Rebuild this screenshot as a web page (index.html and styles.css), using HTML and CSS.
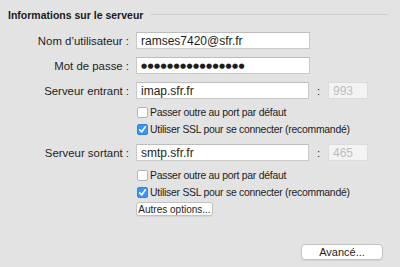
FILE: index.html
```html
<!DOCTYPE html>
<html lang="fr">
<head>
    <meta charset="UTF-8">
    <title>Informations sur le serveur</title>
    <link rel="stylesheet" href="styles.css">
</head>
<body>
    <div class="section-title">
        <span>Informations sur le serveur</span>
        <div class="rule"></div>
    </div>
    <div class="form">
        <div class="row r-user">
            <label class="lbl">Nom d’utilisateur :</label>
            <input class="field wide" type="text" value="ramses7420@sfr.fr">
        </div>
        <div class="row r-pass">
            <label class="lbl">Mot de passe :</label>
            <input class="field wide dots" type="text" value="●●●●●●●●●●●●●●●●">
        </div>
        <div class="row r-in">
            <label class="lbl">Serveur entrant :</label>
            <input class="field server" type="text" value="imap.sfr.fr">
            <span class="colon">:</span>
            <input class="field port" type="text" placeholder="993" disabled>
        </div>
        <div class="row check r-c1">
            <span class="box"></span>
            <span>Passer outre au port par défaut</span>
        </div>
        <div class="row check r-c2">
            <span class="box on"><svg viewBox="0 0 11 11" width="11" height="11"><path d="M2.6 5.8 L4.6 7.9 L8.4 2.8" fill="none" stroke="#fff" stroke-width="1.6" stroke-linecap="round" stroke-linejoin="round"/></svg></span>
            <span>Utiliser SSL pour se connecter (recommandé)</span>
        </div>
        <div class="row r-out">
            <label class="lbl">Serveur sortant :</label>
            <input class="field server" type="text" value="smtp.sfr.fr">
            <span class="colon">:</span>
            <input class="field port" type="text" placeholder="465" disabled>
        </div>
        <div class="row check r-c3">
            <span class="box"></span>
            <span>Passer outre au port par défaut</span>
        </div>
        <div class="row check r-c4">
            <span class="box on"><svg viewBox="0 0 11 11" width="11" height="11"><path d="M2.6 5.8 L4.6 7.9 L8.4 2.8" fill="none" stroke="#fff" stroke-width="1.6" stroke-linecap="round" stroke-linejoin="round"/></svg></span>
            <span>Utiliser SSL pour se connecter (recommandé)</span>
        </div>
        <div class="row r-more">
            <button class="btn small">Autres options...</button>
        </div>
    </div>
    <div class="footer">
        <button class="btn advanced">Avancé...</button>
    </div>
</body>
</html>
```

FILE: styles.css
```css
body{margin:0;width:400px;height:267px;background:#e3e3e3;color:#1d1d1d;font-family:"Liberation Sans",Arial,sans-serif;font-size:11px;overflow:hidden}
.section-title{display:flex;align-items:center;height:14px;margin:8px 12px 0 8px;font-weight:bold;font-size:10.5px;color:#1a1a1a}
.section-title .rule{flex:1;border-top:1px solid #cfcfcf;margin-left:7px;margin-top:-1px}
.form{display:flex;flex-direction:column;margin-top:10px}
.row{display:flex;align-items:center;height:17px;white-space:nowrap}
.lbl{width:136px;text-align:right;padding-right:7px;box-sizing:border-box;font-size:11.4px}
.field{height:17px;box-sizing:border-box;border:1px solid #c9c9c9;border-top-color:#bdbdbd;background:#fff;font-family:inherit;font-size:12px;color:#1d1d1d;padding:0 4px;margin:0;outline:none}
.wide{width:174px}
.server{width:173px}
.dots{font-family:"DejaVu Sans",sans-serif;font-size:7px;letter-spacing:0.4px;padding-left:4px}
.colon{width:19px;text-align:center}
.port{width:40px;border-color:#dcdcdc;background:#f3f3f3}
.port::placeholder{color:#bdbdbd}
.r-pass,.r-in{margin-top:8px}
.check{padding-left:137px;gap:3px;font-size:10.4px;letter-spacing:-0.25px}
.r-c1{margin-top:5px}
.r-out{margin-top:6px}
.r-c3{margin-top:6px}
.box{width:11px;height:11px;box-sizing:border-box;border:1px solid #b3b3b3;border-radius:2px;background:#fff;display:flex;margin-right:-1px}
.box.on{background:#3a95f5;border-color:#2f84e0}
.box svg{display:block;margin:-1px}
.r-more{padding-left:136px;margin-top:1px;height:14px}
.btn{font-family:inherit;font-size:10px;color:#1d1d1d;background:#fff;border:1px solid #c2c2c2;border-radius:3px;box-shadow:0 1px 0 rgba(0,0,0,0.06);padding:0;margin:0;white-space:nowrap}
.small{width:77px;height:14px}
.footer{display:flex;justify-content:flex-end;padding-right:17px;margin-top:28px}
.advanced{width:82px;height:16px;font-size:11px;border-radius:4px}
```
